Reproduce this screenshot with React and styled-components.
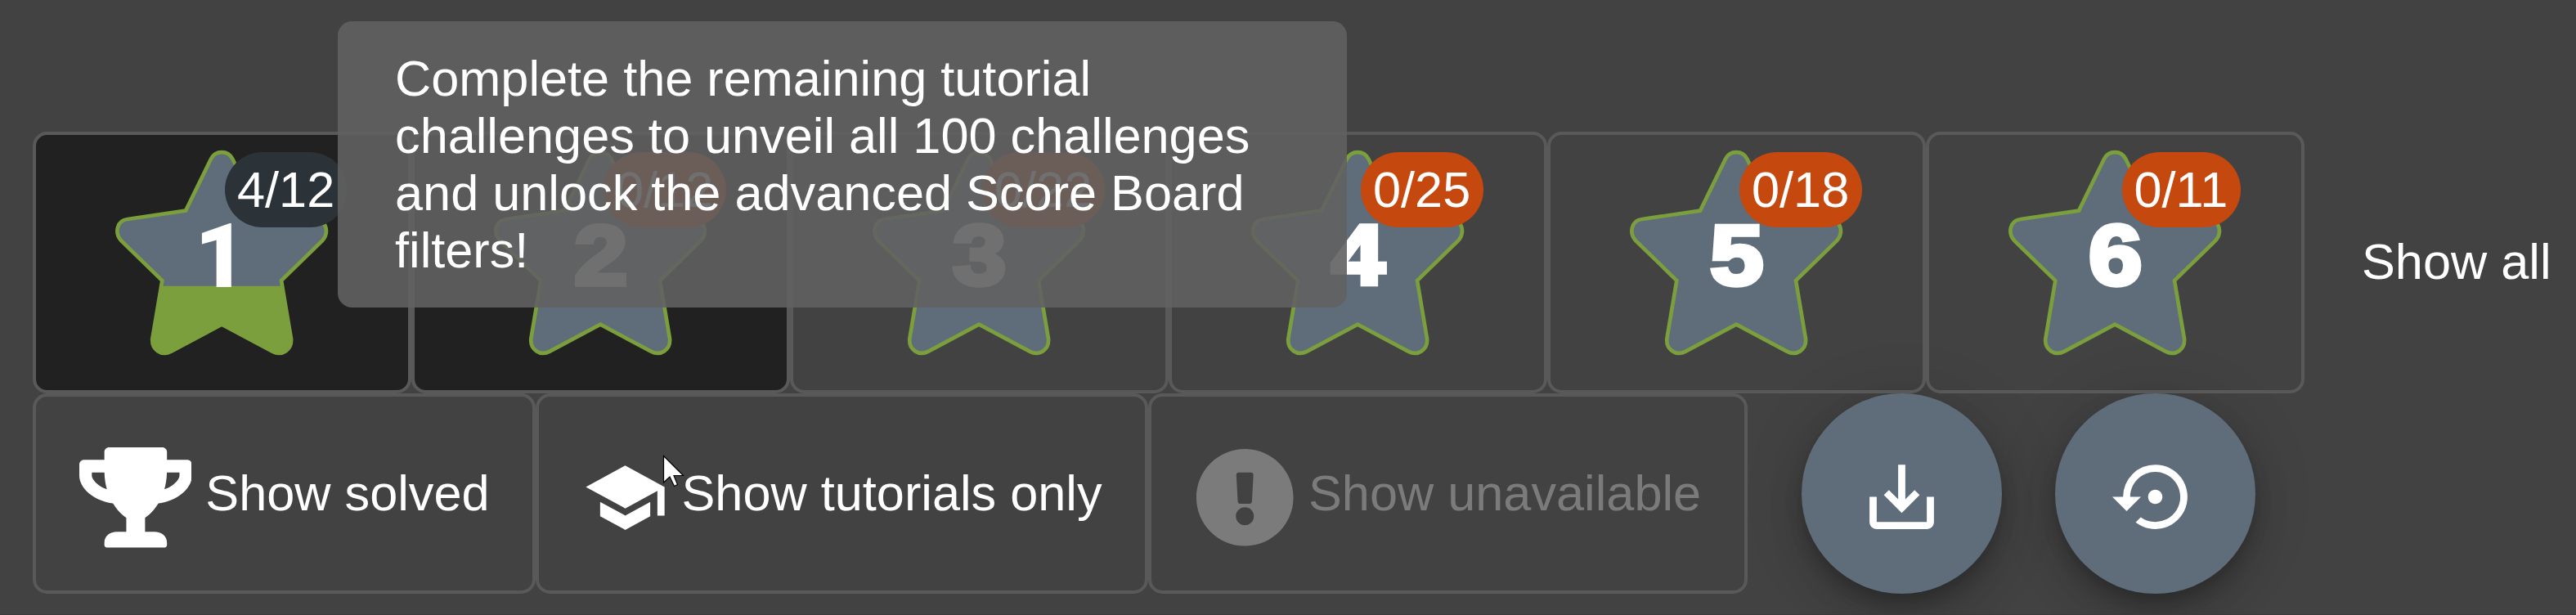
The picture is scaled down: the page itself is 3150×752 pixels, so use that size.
import React from "react";
import styled, { createGlobalStyle, css } from "styled-components";
import { FaTrophy, FaExclamationCircle } from "react-icons/fa";
import { MdSchool, MdSaveAlt, MdSettingsBackupRestore } from "react-icons/md";

const GlobalStyle = createGlobalStyle`
  * { box-sizing: border-box; }
  body {
    margin: 0;
    background: #424242;
    color: #fff;
    font-family: "Liberation Sans", Arial, sans-serif;
    font-size: 61.25px;
    line-height: 70px;
    overflow: hidden;
  }
`;

const Page = styled.main`
  position: relative;
  width: 3150px;
  height: 752px;
  padding: 161px 0 0 40px;
  overflow: hidden;
  background: #424242;
  border-bottom: 1px solid #3b393b;
`;

const FilterRow = styled.div`
  display: flex;
  align-items: center;
`;

const boxed = css`
  border: 4px solid #595959;
  border-radius: 17.5px;
`;

const DifficultyCell = styled.button`
  ${boxed}
  position: relative;
  width: 463px;
  height: 320px;
  padding: 14px 0 0 95.3px;
  display: flex;
  align-items: flex-start;
  background: ${(p) => (p.$selected ? "#212121" : "transparent")};
  font: inherit;
  color: inherit;
`;

const StarSvg = styled.svg`
  display: block;
  flex: none;
  width: 264px;
  height: 257px;
`;

const Digit = styled.text`
  font-family: "Liberation Sans", Arial, sans-serif;
  font-weight: 700;
  font-size: 310px;
  text-anchor: middle;
  fill: #fff;
  stroke: #fff;
  stroke-width: 16px;
`;

/* Plain "1" without a foot serif. */
const DigitOne = styled.text`
  font-family: Roboto, sans-serif;
  font-weight: 900;
  font-size: 329px;
  text-anchor: middle;
  fill: #fff;
`;

const Badge = styled.span`
  position: absolute;
  top: 21px;
  right: 74.5px;
  height: 92px;
  padding: 11px 15.3px 0 14.8px;
  border-radius: 46px;
  line-height: 70px;
  white-space: nowrap;
  background: ${(p) => (p.$started ? "#2b3238" : "#c5480f")};
`;

const ShowAll = styled.span`
  margin-left: 70px;
  padding-bottom: 3px;
  white-space: nowrap;
`;

const FilterButton = styled.button`
  ${boxed}
  width: ${(p) => p.$width}px;
  height: 245px;
  padding: 0 0 0 52.5px;
  display: flex;
  align-items: center;
  gap: 17px;
  background: transparent;
  font: inherit;
  white-space: nowrap;
  color: ${(p) => (p.$disabled ? "#7b7b7b" : "#fff")};

  svg {
    display: block;
    flex: none;
    margin-top: 10px;
  }
`;

const Label = styled.span`
  padding-bottom: 2px;
`;

const TrophyIcon = styled(FaTrophy)`
  width: 137.8px;
  height: 122.5px;
`;

const Fab = styled.button`
  width: 245px;
  height: 245px;
  margin-left: ${(p) => p.$gap}px;
  padding: 8px 0 0;
  display: flex;
  align-items: center;
  justify-content: center;
  border: 0;
  border-radius: 50%;
  color: #fff;
  background: #5e6d79;
  box-shadow:
    0 13px 22px -4px rgba(0, 0, 0, 0.2),
    0 26px 44px 0 rgba(0, 0, 0, 0.14),
    0 4px 79px 0 rgba(0, 0, 0, 0.12);
`;

const Tooltip = styled.div`
  position: absolute;
  left: 413px;
  top: 26px;
  width: 1234px;
  height: 350px;
  padding: 35px 70px;
  border-radius: 17.5px;
  background: rgba(97, 97, 97, 0.9);
  white-space: pre-line;
`;

const Pointer = styled.svg`
  position: absolute;
  left: 810px;
  top: 556px;
  width: 28px;
  height: 42px;
`;

const STAR_PATH =
  "M682 353 L775 163 C791 130 838 130 854 163 L947 353 L1160 384 C1198 388 1210 433 1183 463 L1033 609 L1069 822 C1073 862 1036 888 1000 869 L814.5 770 L629 869 C593 888 556 862 560 822 L596 609 L446 463 C419 433 431 388 469 384 Z";

function Star({ level, partial }) {
  const clipId = `solved-${level}`;
  return (
    <StarSvg viewBox="418 117 792 771">
      <path d={STAR_PATH} fill="#5e6d79" />
      {partial && (
        <>
          <clipPath id={clipId}>
            <rect x="418" y="629" width="792" height="260" />
          </clipPath>
          <path d={STAR_PATH} fill="#7b9f3c" clipPath={`url(#${clipId})`} />
        </>
      )}
      <path d={STAR_PATH} fill="none" stroke="#7b9f3c" strokeWidth="14" />
      {level === 1 ? (
        <DigitOne x="810" y="633">
          {level}
        </DigitOne>
      ) : (
        <Digit transform="translate(816 625) scale(1.14 1)">{level}</Digit>
      )}
    </StarSvg>
  );
}

const LEVELS = [
  { level: 1, count: "4/12", selected: true, started: true },
  { level: 2, count: "0/12", selected: true },
  { level: 3, count: "0/22" },
  { level: 4, count: "0/25" },
  { level: 5, count: "0/18" },
  { level: 6, count: "0/11" },
];

export default function App() {
  return (
    <>
      <GlobalStyle />
      <Page>
        <FilterRow>
          {LEVELS.map((l) => (
            <DifficultyCell key={l.level} $selected={l.selected}>
              <Star level={l.level} partial={l.started} />
              <Badge $started={l.started}>{l.count}</Badge>
            </DifficultyCell>
          ))}
          <ShowAll>Show all</ShowAll>
        </FilterRow>
        <FilterRow>
          <FilterButton $width={615}>
            <TrophyIcon />
            <Label>Show solved</Label>
          </FilterButton>
          <FilterButton $width={749}>
            <MdSchool size={105} />
            <Label>Show tutorials only</Label>
          </FilterButton>
          <FilterButton $width={733} $disabled>
            <FaExclamationCircle size={122.5} />
            <Label>Show unavailable</Label>
          </FilterButton>
          <Fab $gap={66}>
            <MdSaveAlt size={105} />
          </Fab>
          <Fab $gap={65}>
            <MdSettingsBackupRestore size={105} />
          </Fab>
        </FilterRow>
        <Tooltip>
          {"Complete the remaining tutorial\nchallenges to unveil all 100 challenges\nand unlock the advanced Score Board\nfilters!"}
        </Tooltip>
        <Pointer viewBox="0 0 28 42">
          <path
            d="M1.5 1.5 V34 L9 27 L14.5 38.5 L18.5 36.5 L14 25.5 H25.5 Z"
            fill="#fff"
            stroke="#000"
            strokeWidth="1.2"
          />
        </Pointer>
      </Page>
    </>
  );
}
